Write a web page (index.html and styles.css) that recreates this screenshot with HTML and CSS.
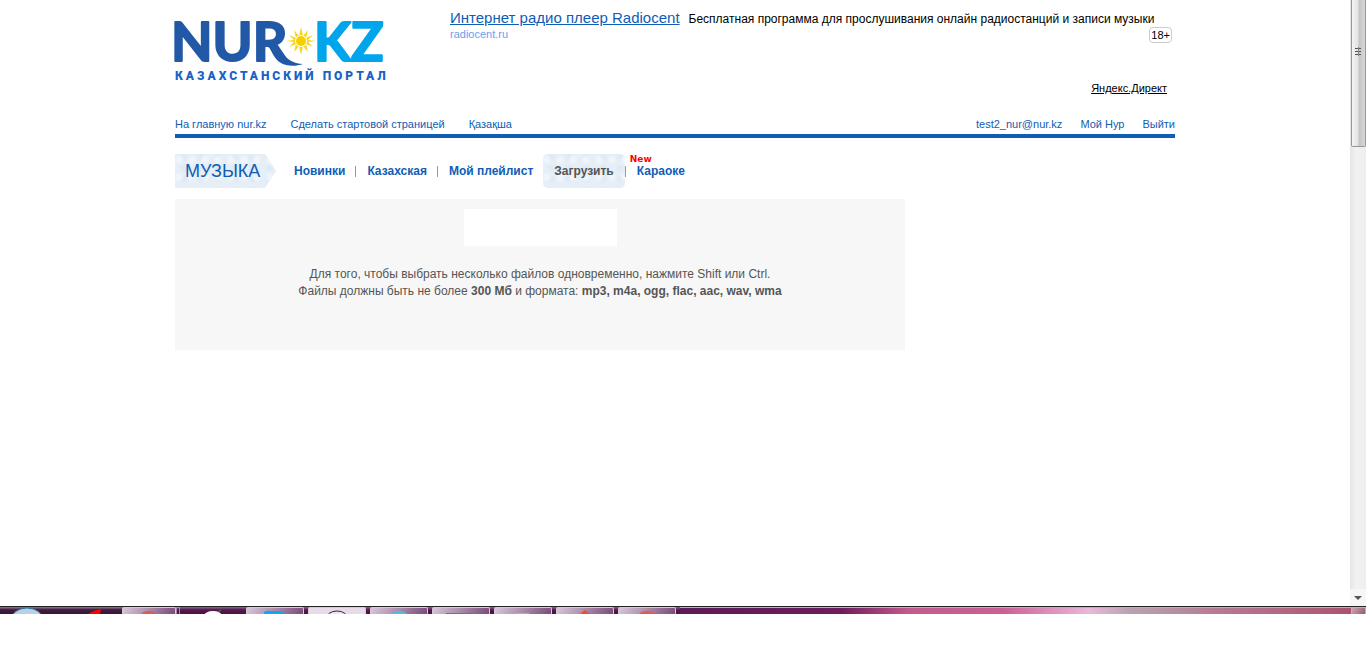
FILE: index.html
```
<!DOCTYPE html>
<html lang="ru">
<head>
<meta charset="utf-8">
<title>Музыка — NUR.KZ</title>
<link rel="stylesheet" href="styles.css">
</head>
<body>
<div class="window">
  <div class="page">
    <header class="header">
      <a class="logo" href="#">
        <svg width="216" height="76" viewBox="0 0 216 76">
          <text class="logo-nur" x="-4" y="51">NUR</text>
          <text class="logo-kz" x="139" y="51">KZ</text>
          <path fill="#2159a6" d="M93 34h9c5 8 9 19 26 20-8 3-17 2-22-1-7-4-9-11-13-19z"/>
          <circle cx="126" cy="31" r="11" fill="#fff"/>
          <path fill="#f6d51c" d="M126 17l2 9 5-6-2 8 7-3-5 5 8 1-8 1 5 5-7-3 2 8-5-6-2 9-2-9-5 6 2-8-7 3 5-5-8-1 8-1-5-5 7 3-2-8 5 6z"/>
          <circle cx="126" cy="31" r="6" fill="#fff"/>
          <circle cx="126" cy="31" r="5" fill="#f5cf00"/>
          <text class="logo-sub" x="0" y="70">КАЗАХСТАНСКИЙ ПОРТАЛ</text>
        </svg>
      </a>
      <aside class="ad">
        <p class="ad-line"><a class="ad-title" href="#">Интернет радио плеер Radiocent</a><span>Бесплатная программа для прослушивания онлайн радиостанций и записи музыки</span></p>
        <div class="ad-meta"><a class="ad-domain" href="#">radiocent.ru</a><span class="age">18+</span></div>
        <a class="ad-source" href="#">Яндекс.Директ</a>
      </aside>
    </header>
    <nav class="topbar">
      <div class="top-left"><a href="#">На главную nur.kz</a><a href="#">Сделать стартовой страницей</a><a href="#">Қазақша</a></div>
      <div class="top-right"><a href="#">test2_nur@nur.kz</a><a href="#">Мой Нур</a><a href="#">Выйти</a></div>
    </nav>
    <nav class="section">
      <h1 class="section-title">МУЗЫКА</h1>
      <a class="item" href="#">Новинки</a><i class="sep"></i>
      <a class="item" href="#">Казахская</a><i class="sep"></i>
      <a class="item" href="#">Мой плейлист</a>
      <a class="item item-active" href="#">Загрузить</a><i class="sep"></i>
      <a class="item item-new" href="#">Караоке<span class="new">New</span></a>
    </nav>
    <main class="panel">
      <div class="picker"></div>
      <p>Для того, чтобы выбрать несколько файлов одновременно, нажмите Shift или Ctrl.<br>Файлы должны быть не более <b>300 Мб</b> и формата: <b>mp3, m4a, ogg, flac, aac, wav, wma</b></p>
    </main>
  </div>
  <div class="scroll">
    <div class="thumb"><svg width="8" height="9"><path d="M0 1.500h6M0 4.500h6M0 7.500h6" stroke="#555"/><path d="M3.500 0v9" stroke="#888"/></svg></div>
    <svg class="arrow" width="8" height="5"><path d="M0 0h8L4 4z" fill="#555"/></svg>
  </div>
</div>
<div class="taskbar">
  <div class="launch">
    <svg width="120" height="6"><ellipse cx="27" cy="12" rx="16" ry="12" fill="#b5d3e4" stroke="#39709d"/><path d="M88 6c5-3 8-4 13-5l-1 5z" fill="#f00"/></svg>
  </div>
  <div class="task"><svg width="20" height="6"><ellipse cx="10" cy="7" rx="8" ry="4" fill="#d85d55"/></svg></div>
  <div class="task-edge"></div>
  <div class="plain"><svg width="20" height="6"><ellipse cx="10" cy="8" rx="9" ry="5" fill="#fff"/><path d="M15 4l3-2" stroke="#678b35"/></svg></div>
  <div class="task"><svg width="24" height="6"><path d="M1 6V4q3-2 8-1h10l4 3z" fill="#10a7ec"/></svg></div>
  <div class="task task-light"><svg width="24" height="6"><ellipse cx="12" cy="11" rx="11" ry="8" fill="#eee6ee" stroke="#36204c"/></svg></div>
  <div class="task"><svg width="20" height="6"><ellipse cx="10" cy="7" rx="8" ry="4" fill="#4fbce8"/></svg></div>
  <div class="task"><svg width="30" height="6"><path d="M0 5.500h30" stroke="#777078"/></svg></div>
  <div class="task"><svg width="20" height="6"><path d="M2 5.500h14" stroke="#c8b27c"/></svg></div>
  <div class="task"><svg width="20" height="6"><path d="M5 6l5-4 5 4z" fill="#f04d2c"/></svg></div>
  <div class="task"><svg width="20" height="6"><ellipse cx="10" cy="7" rx="8" ry="4" fill="#e25b50"/></svg></div>
  <div class="glass"></div>
  <div class="desktop"></div>
</div>
</body>
</html>
```
FILE: styles.css
```
* { box-sizing: border-box; }
body {
  margin: 0;
  height: 100vh;
  padding-bottom: 53px;
  display: flex;
  flex-direction: column;
  background: #fff;
  color: #555;
  font: 12px "Liberation Sans", Arial, sans-serif;
}
a { color: #0f5db5; text-decoration: none; }
p, h1 { margin: 0; }
svg { display: block; }
.window { flex: 1; display: flex; }
.page { flex: 1; max-width: 1000px; margin: 0 auto; }

.header { display: flex; justify-content: space-between; height: 115px; padding-top: 10px; }
.logo svg { overflow: visible; }
.logo-nur, .logo-kz { font: 700 54px Lato, sans-serif; fill: #2159a6; stroke: #2159a6; stroke-width: 2px; stroke-linejoin: round; }
.logo-kz { fill: #00a5ec; stroke: #00a5ec; }
.logo-sub { font: 900 12px Roboto, sans-serif; letter-spacing: 3px; fill: #1763c6; }
.ad { width: 725px; display: flex; flex-direction: column; font-size: 11px; }
.ad-line { display: flex; align-items: baseline; gap: 9px; white-space: nowrap; color: #000; font-size: 12px; line-height: 15px; }
.ad-title { font-size: 15px; text-decoration: underline; }
.ad-meta { display: flex; justify-content: space-between; padding-right: 3px; line-height: 14px; }
.ad-domain { color: #6c9df0; }
.age { border: 1px solid #ccc; border-radius: 4px; padding: 0 1px; color: #000; }
.ad-source { align-self: flex-end; margin: 39px 8px 0 0; color: #000; text-decoration: underline; }

.topbar { display: flex; justify-content: space-between; height: 23px; border-bottom: 4px solid #0f5db5; font-size: 11px; line-height: 18px; }
.top-left { display: flex; gap: 24px; }
.top-right { display: flex; gap: 18px; }

.section { display: flex; align-items: center; height: 34px; margin: 16px 0 11px; font-weight: 700; }
.section-title, .item-active {
  background:
    radial-gradient(circle at 4px 6px, #f0f5fa 0 2px, transparent 5px) 0 0 / 13px 17px,
    radial-gradient(circle at 9px 3px, #dfe9f4 0 1px, transparent 5px) 0 0 / 17px 11px,
    #e6eef7;
}
.section-title {
  width: 101px;
  padding-left: 10px;
  margin-right: 7px;
  line-height: 34px;
  font-size: 18px;
  font-weight: 400;
  color: #0f5db5;
  clip-path: polygon(0 0, 90px 0, 100% 50%, 90px 100%, 0 100%);
}
.item { padding: 0 10px 0 11px; line-height: 34px; }
.item-active { color: #555; padding: 0 11px; border-radius: 5px; }
.sep { width: 1px; height: 11px; background: #999; }
.item-new { position: relative; }
.new { position: absolute; left: 4px; top: -1px; color: #f00; font: 700 9px/12px "DejaVu Sans", sans-serif; }

.panel { width: 73%; padding: 10px 0 50px; background: #f7f7f7; text-align: center; line-height: 17px; }
.picker { width: 153px; height: 37px; margin: 0 auto 20px; background: #fff; }

.scroll { width: 16px; display: flex; flex-direction: column; justify-content: space-between; align-items: center; background: linear-gradient(90deg, #e6e6e6, #f2f2f2 40%, #eee); }
.thumb { width: 15px; height: 147px; padding: 47px 0 0 3px; border: 1px solid #979797; border-top: 0; border-radius: 0 0 2px 2px; background: linear-gradient(90deg, #f4f4f4, #e3e3e3 45%, #c4c4c8 55%, #d8d8d8); }
.arrow { width: 16px; height: 17px; padding: 7px 4px 5px; background: #f6f6f6; }

.taskbar { display: flex; height: 8px; overflow: hidden; border-top: 1px solid #222; background: linear-gradient(#8b6a8b, #54184f 40%, #4a1246); }
.taskbar svg { margin-top: 1px; }
.launch { width: 122px; background: linear-gradient(#8d7a8c, #401c40 40%, #38143a); }
.task { width: 58px; margin-right: 4px; display: flex; justify-content: center; border: 1px solid #d9c8d6; border-bottom: 0; border-radius: 2px 2px 0 0; background: linear-gradient(120deg, #d8c6d8, #a98aaa 50%, #7b4a7c); }
.launch + .task { width: 54px; margin-right: 0; }
.task svg { margin-top: 0; flex: none; }
.task-light { background: #e6dbe6; }
.task-edge { width: 4px; border: 1px solid #a58ba5; border-bottom: 0; }
.plain { width: 66px; padding-left: 23px; }
.glass { flex: 1; border-top: 1px solid #d2a3bd; background: linear-gradient(90deg, #5b1a58, #6d1d5f 24%, #c45a8c 34%, #cb5f96 48%, #eab8d8 61%, #b8a3b2 67%, #b67b94 80%, #ab5371); }
.desktop { width: 15px; border: 1px solid #d7a5b7; border-bottom: 0; background: linear-gradient(120deg, #c9a3b1, #965d72); }
```
